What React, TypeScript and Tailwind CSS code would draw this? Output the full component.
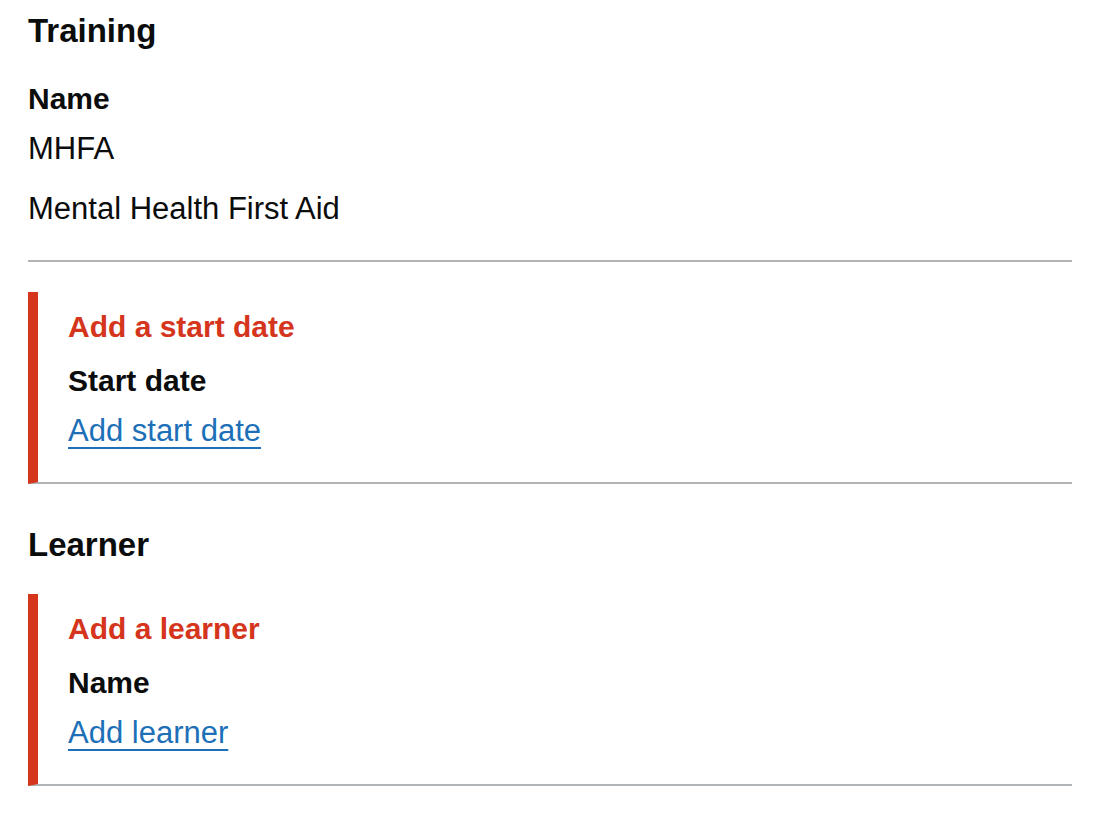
import React from 'react';

const font = { fontFamily: '"Liberation Sans", Arial, sans-serif' };

const MissingItem: React.FC<{ title: string; label: string; action: string }> = ({ title, label, action }) => (
  <div className="border-l-[10px] border-l-[#d4351c] border-b-2 border-b-[#b1b4b6] pl-[30px] pt-[10px] pb-[26px]">
    <p className="text-[30px] leading-[50px] font-bold text-[#d4351c]">{title}</p>
    <p className="mt-[4px] text-[30px] leading-[50px] font-bold text-[#0b0c0c]">{label}</p>
    <a href="#" className="text-[31px] leading-[50px] text-[#1d70b8] underline decoration-2 underline-offset-[6px]">
      {action}
    </a>
  </div>
);

export default function App() {
  return (
    <div className="min-h-screen bg-white pl-[28px] pr-[30px] pt-[11px]" style={font}>
      <h2 className="text-[33px] leading-[40px] font-bold text-[#0b0c0c]">Training</h2>

      <p className="mt-[23px] text-[30px] leading-[50px] font-bold text-[#0b0c0c]">Name</p>
      <p className="text-[31px] leading-[50px] text-[#0b0c0c]">MHFA</p>
      <p className="mt-[10px] text-[31px] leading-[50px] text-[#0b0c0c]">Mental Health First Aid</p>

      <hr className="mt-[26px] border-0 border-t-2 border-[#b1b4b6]" />

      <div className="mt-[30px]">
        <MissingItem title="Add a start date" label="Start date" action="Add start date" />
      </div>

      <h2 className="mt-[41px] text-[33px] leading-[40px] font-bold text-[#0b0c0c]">Learner</h2>

      <div className="mt-[29px]">
        <MissingItem title="Add a learner" label="Name" action="Add learner" />
      </div>
    </div>
  );
}
